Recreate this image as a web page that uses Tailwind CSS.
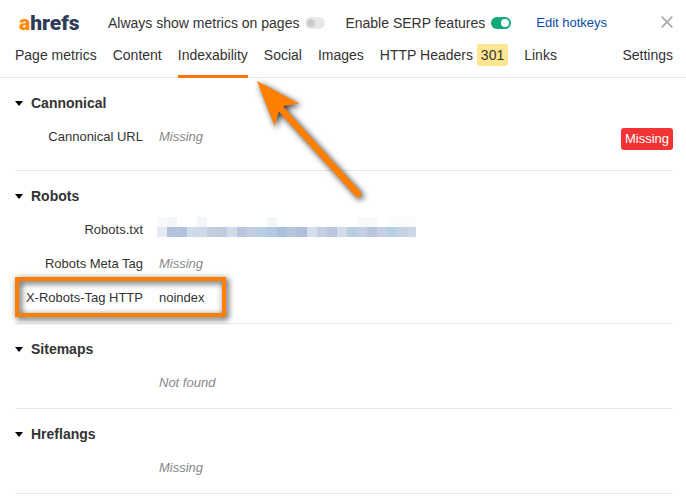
<!DOCTYPE html>
<html lang="en">
<head>
    <meta charset="UTF-8">
    <meta name="viewport" content="width=device-width, initial-scale=1.0">
    <title>Ahrefs SEO Toolbar</title>
    <script src="https://cdn.jsdelivr.net/npm/@tailwindcss/browser@4"></script>
</head>
<body class="bg-white text-[#333] font-['Liberation_Sans',Arial,sans-serif] text-[13px] leading-5">

    <!-- Header -->
    <header class="border-b border-[#e8e8e8]">
        <div class="flex items-center pl-[19px] pr-[13px] pt-2 h-[38px] text-sm">
            <a href="#" class="w-[62px] font-['Roboto',sans-serif] text-[21px] font-black text-[#2f3c56]"><span class="text-[#ff8800]">a</span>hrefs</a>
            <label class="flex items-center gap-1.5 ml-[27px]">
                Always show metrics on pages
                <input type="checkbox" class="appearance-none w-5 h-3 rounded-full bg-[#e8e8e8] before:block before:size-2 before:m-0.5 before:rounded-full before:bg-[#ccc]">
            </label>
            <label class="flex items-center gap-1.5 ml-5">
                Enable SERP features
                <input type="checkbox" checked class="appearance-none w-5 h-3 rounded-full bg-[#12a879] before:block before:size-2 before:my-0.5 before:ml-2.5 before:rounded-full before:bg-white">
            </label>
            <a href="#" class="ml-[25px] text-[13px] text-[#0b4ca8]">Edit hotkeys</a>
            <button type="button" aria-label="Close" class="ml-auto -mt-0.5">
                <svg class="size-3" viewBox="0 0 12 12" fill="none" stroke="#aaa" stroke-width="1.7"><path d="M.7.7l10.6 10.6M11.3.7L.7 11.3"/></svg>
            </button>
        </div>
        <nav class="flex gap-4 pl-[15px] pr-[13px] h-[39px] text-sm leading-[34px]">
            <a href="#">Page metrics</a>
            <a href="#">Content</a>
            <a href="#" class="-mb-px border-b-3 border-[#ff7700]">Indexability</a>
            <a href="#">Social</a>
            <a href="#">Images</a>
            <a href="#">HTTP Headers <span class="inline-block px-1 rounded-[3px] bg-[#fde68f] leading-[22px]">301</span></a>
            <a href="#">Links</a>
            <a href="#" class="ml-auto">Settings</a>
        </nav>
    </header>

    <main class="relative pl-[15px] pr-[13px]">
        <section class="pt-[15px] pb-[9px] border-b border-[#e8e8e8]">
            <button type="button" class="flex items-center gap-2 mb-1.5 text-sm leading-5 font-bold">
                <svg class="w-2 h-[5px]" viewBox="0 0 8 5"><path d="M0 0h8L4 5z"/></svg>
                Cannonical
            </button>
            <dl>
                <div class="flex gap-4 pt-2 pb-1.5">
                    <dt class="w-32 text-right">Cannonical URL</dt>
                    <dd class="italic text-[#888]">Missing</dd>
                    <dd class="ml-auto mt-px mb-[5px] px-1 rounded-[3px] bg-[#f23333] text-white leading-[22px]">Missing</dd>
                </div>
            </dl>
        </section>

        <section class="pt-[15px] pb-[9px] border-b border-[#e8e8e8]">
            <button type="button" class="flex items-center gap-2 mb-1.5 text-sm leading-5 font-bold">
                <svg class="w-2 h-[5px]" viewBox="0 0 8 5"><path d="M0 0h8L4 5z"/></svg>
                Robots
            </button>
            <dl>
                <div class="flex gap-4 pt-2 pb-1.5 h-[34px]">
                    <dt class="w-32 text-right">Robots.txt</dt>
                    <dd class="-ml-0.5 -mt-[3px]">
                        <!-- Pixelated url -->
                        <svg class="w-[259px] h-5" viewBox="0 0 259 20" shape-rendering="crispEdges">
                            <path fill="#f8f9fb" d="M0 0h10v10H0zM200 0h20v10h-20z"/>
                            <path fill="#f3f6f9" d="M10 0h10v10H10zM40 0h10v10H40zM110 0h10v10h-10z"/>
                            <path fill="#fafcfd" d="M230 0h29v10h-29z"/>
                            <rect x="0" y="10" width="10" height="10" fill="#e6eaf4"/>
                            <rect x="10" y="10" width="10" height="10" fill="#b4c3dd"/>
                            <rect x="20" y="10" width="10" height="10" fill="#b1c2dc"/>
                            <rect x="30" y="10" width="10" height="10" fill="#cddae9"/>
                            <rect x="40" y="10" width="10" height="10" fill="#d0dae6"/>
                            <rect x="50" y="10" width="10" height="10" fill="#c5cee1"/>
                            <rect x="60" y="10" width="10" height="10" fill="#c2cbe0"/>
                            <rect x="70" y="10" width="10" height="10" fill="#d0dce8"/>
                            <rect x="80" y="10" width="10" height="10" fill="#bac6df"/>
                            <rect x="90" y="10" width="10" height="10" fill="#c3cfe4"/>
                            <rect x="100" y="10" width="10" height="10" fill="#b7cde1"/>
                            <rect x="110" y="10" width="10" height="10" fill="#b6c9e3"/>
                            <rect x="120" y="10" width="10" height="10" fill="#a9c0da"/>
                            <rect x="130" y="10" width="10" height="10" fill="#b6c4dd"/>
                            <rect x="140" y="10" width="10" height="10" fill="#b0bedb"/>
                            <rect x="150" y="10" width="10" height="10" fill="#d1deed"/>
                            <rect x="160" y="10" width="10" height="10" fill="#c3cfe5"/>
                            <rect x="170" y="10" width="10" height="10" fill="#bbc7df"/>
                            <rect x="180" y="10" width="10" height="10" fill="#d0dde8"/>
                            <rect x="190" y="10" width="10" height="10" fill="#b8cde1"/>
                            <rect x="200" y="10" width="10" height="10" fill="#c3d0e4"/>
                            <rect x="210" y="10" width="10" height="10" fill="#bac5de"/>
                            <rect x="220" y="10" width="10" height="10" fill="#c4d0e3"/>
                            <rect x="230" y="10" width="10" height="10" fill="#b7cfe4"/>
                            <rect x="240" y="10" width="10" height="10" fill="#c6d2e4"/>
                            <rect x="250" y="10" width="9" height="10" fill="#cbd8e9"/>
                        </svg>
                    </dd>
                </div>
                <div class="flex gap-4 pt-2 pb-1.5">
                    <dt class="w-32 text-right">Robots Meta Tag</dt>
                    <dd class="italic text-[#888]">Missing</dd>
                </div>
                <div class="relative flex gap-4 pt-2 pb-1.5">
                    <dt class="w-32 text-right">X-Robots-Tag HTTP</dt>
                    <dd>noindex</dd>
                    <div class="absolute left-0 -inset-y-[3px] w-[211px] border-4 border-[#ff8000] drop-shadow-[2px_2px_3px_rgba(0,0,0,0.8)]"></div>
                </div>
            </dl>
        </section>

        <section class="pt-[15px] pb-[9px] border-b border-[#e8e8e8]">
            <button type="button" class="flex items-center gap-2 mb-1.5 text-sm leading-5 font-bold">
                <svg class="w-2 h-[5px]" viewBox="0 0 8 5"><path d="M0 0h8L4 5z"/></svg>
                Sitemaps
            </button>
            <p class="pt-2 pb-1.5 pl-36 italic text-[#888]">Not found</p>
        </section>

        <section class="pt-[15px] pb-[9px] border-b border-[#e8e8e8]">
            <button type="button" class="flex items-center gap-2 mb-1.5 text-sm leading-5 font-bold">
                <svg class="w-2 h-[5px]" viewBox="0 0 8 5"><path d="M0 0h8L4 5z"/></svg>
                Hreflangs
            </button>
            <p class="pt-2 pb-1.5 pl-36 italic text-[#888]">Missing</p>
        </section>

        <!-- Arrow to the active tab -->
        <svg class="absolute left-[257px] top-[3px] w-[106px] h-[118px] overflow-visible drop-shadow-[2px_2px_3px_rgba(0,0,0,0.8)]" viewBox="0 0 106 118">
            <path d="M24 28L101 113" stroke="#ff8000" stroke-width="6.5" stroke-linecap="round"/>
            <path d="M0 0L42 22.5L27 25L22 30L17.500 45z" fill="#ff8000"/>
        </svg>
    </main>
</body>
</html>
